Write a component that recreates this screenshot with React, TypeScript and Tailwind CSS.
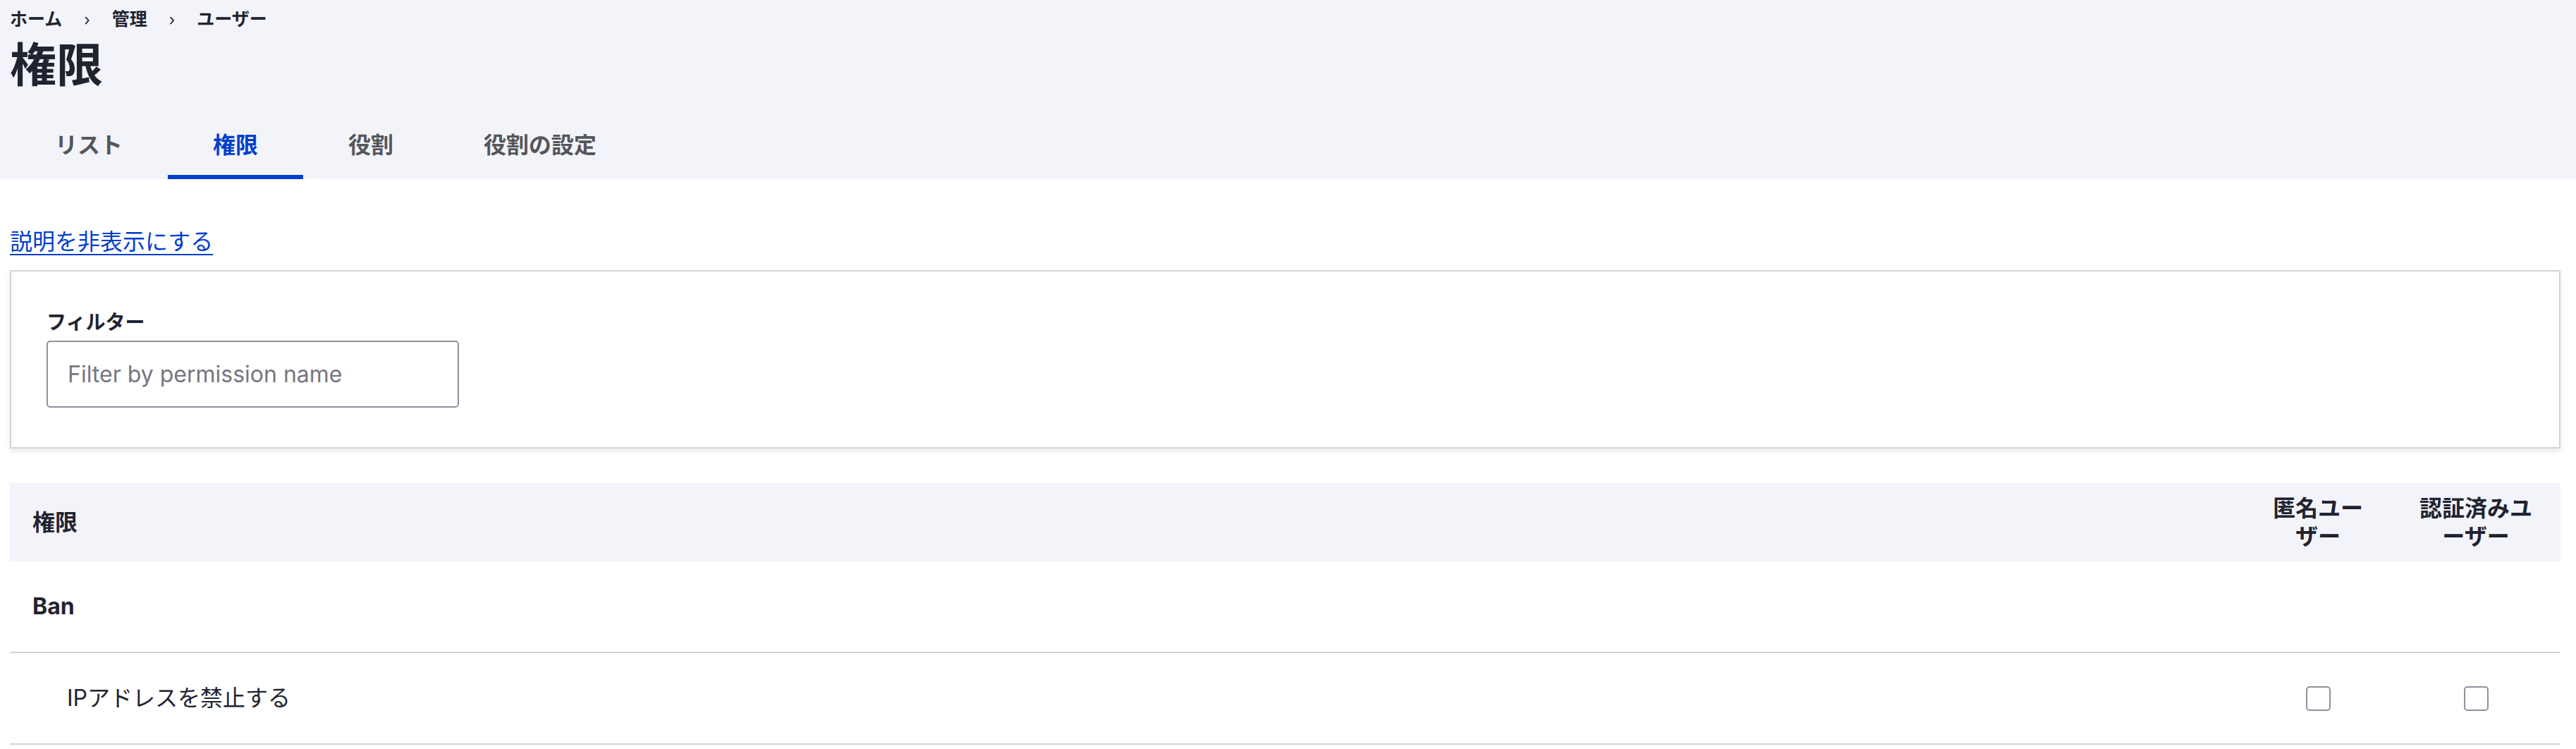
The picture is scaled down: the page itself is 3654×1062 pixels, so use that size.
import React from "react";

const tabs = ["リスト", "権限", "役割", "役割の設定"];
const crumbs = ["ホーム", "管理", "ユーザー"];

const Checkbox: React.FC = () => (
  <input
    type="checkbox"
    className="appearance-none w-[35px] h-[35px] border-2 border-[#8e929c] rounded-[5px] bg-white"
  />
);

const App: React.FC = () => {
  return (
    <div className="min-h-screen bg-white text-[#222330] font-['Inter','Noto_Sans_CJK_JP',sans-serif]">
      <header className="bg-[#f3f4f9] pl-[14px]">
        <nav className="h-[56px] flex items-center text-[25px] font-bold">
          {crumbs.map((c, i) => (
            <React.Fragment key={c}>
              {i > 0 && <span className="mx-[31px] font-normal text-[22px]">›</span>}
              <span>{c}</span>
            </React.Fragment>
          ))}
        </nav>
        <h1 className="h-[72px] leading-[72px] text-[66px] font-bold">権限</h1>
        <div className="mt-[30px] flex h-[96px]">
          {tabs.map((t, i) => (
            <div
              key={t}
              className={
                i === 1
                  ? "px-[64px] flex items-center text-[32px] font-bold text-[#003ecc] shadow-[inset_0_-6px_0_#003ecc]"
                  : "px-[64px] flex items-center text-[32px] font-bold text-[#55565b]"
              }
            >
              {t}
            </div>
          ))}
        </div>
      </header>

      <main className="pl-[14px] pr-[22px]">
        <div className="mt-[65px] h-[48px] leading-[48px] text-[32px]">
          <a href="#" className="text-[#003ecc] underline underline-offset-[6px] decoration-2">
            説明を非表示にする
          </a>
        </div>

        <div className="mt-[16px] border-2 border-[#d3d4d9] bg-white shadow-[0_4px_8px_rgba(0,0,0,0.08)] pl-[50px] pt-[54px] pb-[56px]">
          <label className="block h-[36px] leading-[36px] text-[28px] font-bold">フィルター</label>
          <input
            type="text"
            placeholder="Filter by permission name"
            className="mt-[8px] block w-[585px] h-[95px] border-2 border-[#8e929c] rounded-[5px] px-[28px] text-[32px] placeholder:text-[#75767f] outline-none"
          />
        </div>

        <div className="mt-[49px]">
          <div className="grid grid-cols-[1fr_208px_240px] h-[111px] bg-[#f3f4f9] items-center text-[32px] font-bold">
            <div className="pl-[32px]">権限</div>
            <div className="text-center leading-[40px] px-[34px]">匿名ユーザー</div>
            <div className="text-center leading-[40px] px-[38px]">認証済みユーザー</div>
          </div>
          <div className="h-[130px] flex items-center pl-[32px] border-b-2 border-[#d3d4d9] text-[32px] font-bold">
            Ban
          </div>
          <div className="grid grid-cols-[1fr_208px_240px] h-[130px] items-center border-b-2 border-[#d3d4d9] text-[32px]">
            <div className="pl-[81px]">IPアドレスを禁止する</div>
            <div className="flex justify-center">
              <Checkbox />
            </div>
            <div className="flex justify-center">
              <Checkbox />
            </div>
          </div>
        </div>
      </main>
    </div>
  );
};

export default App;
